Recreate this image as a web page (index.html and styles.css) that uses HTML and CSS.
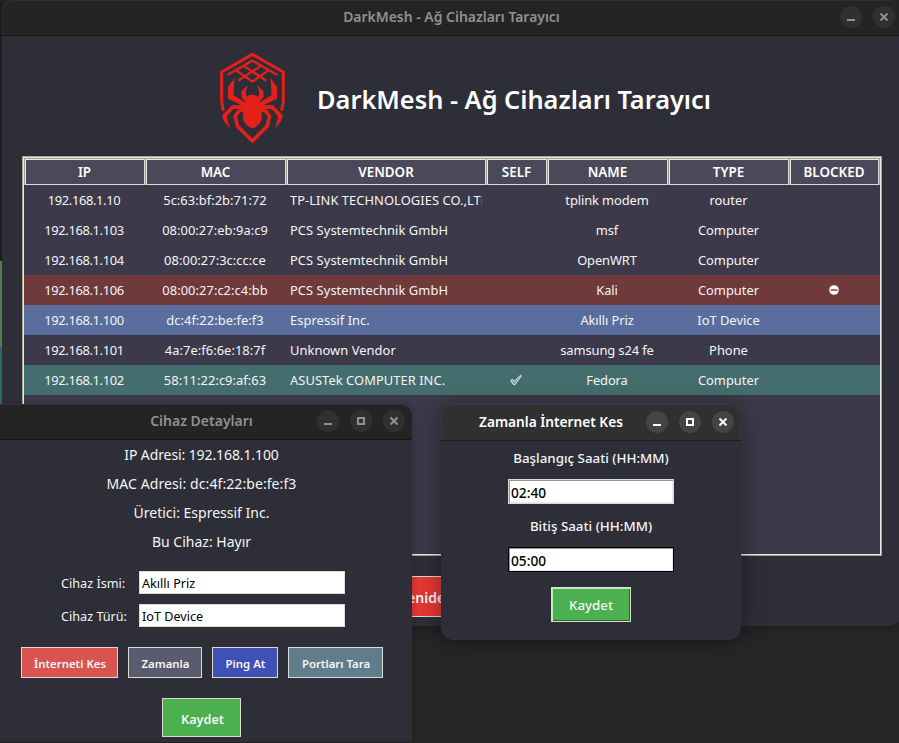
FILE: index.html
```
<!DOCTYPE html>
<html lang="tr">
<head>
<meta charset="utf-8">
<title>DarkMesh</title>
<link rel="stylesheet" href="styles.css">
</head>
<body>
<svg class="defs" width="0" height="0">
  <symbol id="min" viewBox="0 0 22 22"><path d="M7 13h8v2H7z" fill="currentColor"/></symbol>
  <symbol id="max" viewBox="0 0 22 22"><path d="M8 8h6v6H8z" fill="none" stroke="currentColor" stroke-width="2"/></symbol>
  <symbol id="close" viewBox="0 0 22 22"><path d="M7.500 7.500l7 7M14.500 7.500l-7 7" fill="none" stroke="currentColor" stroke-width="2"/></symbol>
</svg>
<div class="desktop">
  <div class="edge"></div>
  <section class="window main">
    <header class="titlebar">
      <span class="title">DarkMesh - Ağ Cihazları Tarayıcı</span>
      <div class="controls">
        <svg><use href="#min"/></svg><svg><use href="#close"/></svg>
      </div>
    </header>
    <div class="brand">
      <svg class="logo" viewBox="0 0 228 300">
        <g fill="none" stroke="#e32019">
          <path stroke-width="9" d="M25 188L20 160V72L112 19l93 53v88l-5 28"/>
          <path stroke-width="7" d="M37 81l75-43 75 43M86 53l68 45M138 53L70 98M64 67l48 34 48-34"/>
          <path stroke-width="11" d="M92 184l-20 5-12 16 8 30 44 44 44-44 8-30-12-16-20-5"/>
        </g>
        <g id="legs" fill="#e32019">
          <path d="M59 90L39 116v36l51 24v-13l-34-21V124z"/>
          <path d="M99 110l-20 20v17l13 15 10-7-9-14v-12z"/>
          <path d="M92 172l-40-1-31 31 6 18 18 21-8-27-1-10 20-21 36-1z"/>
        </g>
        <use href="#legs" transform="matrix(-1 0 0 1 225 0)"/>
        <path fill="#e32019" d="M98 144q14-8 29 0l5 14 8 24v32q-6 20-28 27-22-7-28-27v-32l8-24z"/>
      </svg>
      <h1>DarkMesh - Ağ Cihazları Tarayıcı</h1>
    </div>
    <div class="table">
      <div class="row head"><b>IP</b><b>MAC</b><b>VENDOR</b><b>SELF</b><b>NAME</b><b>TYPE</b><b>BLOCKED</b></div>
      <div class="row"><span>192.168.1.10</span><span>5c:63:bf:2b:71:72</span><span>TP-LINK TECHNOLOGIES CO.,LTD.</span><span></span><span>tplink modem</span><span>router</span><span></span></div>
      <div class="row"><span>192.168.1.103</span><span>08:00:27:eb:9a:c9</span><span>PCS Systemtechnik GmbH</span><span></span><span>msf</span><span>Computer</span><span></span></div>
      <div class="row"><span>192.168.1.104</span><span>08:00:27:3c:cc:ce</span><span>PCS Systemtechnik GmbH</span><span></span><span>OpenWRT</span><span>Computer</span><span></span></div>
      <div class="row blocked"><span>192.168.1.106</span><span>08:00:27:c2:c4:bb</span><span>PCS Systemtechnik GmbH</span><span></span><span>Kali</span><span>Computer</span><span><svg class="stop" viewBox="0 0 10 10"><circle cx="5" cy="5" r="4.800" fill="#fff"/><path d="M1.500 5h7" stroke="#703a3a" stroke-width="1.400"/></svg></span></div>
      <div class="row selected"><span>192.168.1.100</span><span>dc:4f:22:be:fe:f3</span><span>Espressif Inc.</span><span></span><span>Akıllı Priz</span><span>IoT Device</span><span></span></div>
      <div class="row"><span>192.168.1.101</span><span>4a:7e:f6:6e:18:7f</span><span>Unknown Vendor</span><span></span><span>samsung s24 fe</span><span>Phone</span><span></span></div>
      <div class="row self"><span>192.168.1.102</span><span>58:11:22:c9:af:63</span><span>ASUSTek COMPUTER INC.</span><span><svg class="check" viewBox="0 0 12 12"><path d="M.6 6.500l2.200-1.200 1.400 2.200L10.500 1.200l1 .600L5 10.700 3.200 10.400z" fill="#7fa5a2" stroke="#e8f0ef" stroke-width=".9"/></svg></span><span>Fedora</span><span>Computer</span><span></span></div>
    </div>
    <button class="scan">Yeniden Tara</button>
  </section>

  <section class="window details">
    <header class="titlebar">
      <span class="title">Cihaz Detayları</span>
      <div class="controls">
        <svg><use href="#min"/></svg><svg><use href="#max"/></svg><svg><use href="#close"/></svg>
      </div>
    </header>
    <p class="ip">IP Adresi: 192.168.1.100</p>
    <p class="mac">MAC Adresi: dc:4f:22:be:fe:f3</p>
    <p>Üretici: Espressif Inc.</p>
    <p>Bu Cihaz: Hayır</p>
    <div class="form">
      <label>Cihaz İsmi:</label><div class="field">Akıllı Priz</div>
      <label>Cihaz Türü:</label><div class="field">IoT Device</div>
    </div>
    <div class="actions">
      <button class="cut">İnterneti Kes</button><button class="timer">Zamanla</button><button class="ping">Ping At</button><button class="ports">Portları Tara</button>
    </div>
    <button class="save">Kaydet</button>
  </section>

  <section class="window schedule">
    <header class="titlebar">
      <span class="title">Zamanla İnternet Kes</span>
      <div class="controls">
        <svg><use href="#min"/></svg><svg><use href="#max"/></svg><svg><use href="#close"/></svg>
      </div>
    </header>
    <label>Başlangıç Saati (HH:MM)</label>
    <div class="time">02:40</div>
    <label>Bitiş Saati (HH:MM)</label>
    <div class="time focus">05:00</div>
    <button class="apply">Kaydet</button>
  </section>
</div>
</body>
</html>
```
FILE: styles.css
```
* { box-sizing: border-box; }
body { margin: 0; font-family: "Noto Sans", sans-serif; background: #272727; color: #f4f4f6; }
.defs { position: absolute; }
.desktop { position: relative; width: 899px; height: 743px; overflow: hidden; background: #272727; }
.edge { width: 3px; height: 404px; background: linear-gradient(#222 0 261px, #5b8f5b 261px 347px, #37727a 347px); }

.window { position: absolute; background: #2e2e38; display: flex; flex-direction: column; }
.titlebar { flex: none; height: 36px; background: #242424; border-bottom: 1px solid #171717; border-radius: 12px 12px 0 0; position: relative; display: flex; align-items: center; justify-content: center; box-shadow: inset 0 1px #303030; }
.title { font-size: 14px; font-weight: 600; line-height: 20px; color: #919191; white-space: nowrap; }
.controls { position: absolute; top: 6px; right: 6px; display: flex; gap: 11px; color: #919191; }
.controls svg { width: 22px; height: 22px; border-radius: 50%; background: #303030; }
button { font-family: inherit; color: #f6f6f6; padding: 0; border: 1px solid #dcdad5; border-radius: 0; white-space: nowrap; }

.main { left: 2px; top: 0; width: 899px; height: 626px; border-radius: 12px; box-shadow: 0 3px 14px rgba(0,0,0,.25); }
.main > .titlebar { box-shadow: inset 1px 1px #2f2f2f; }
.main .title { font-size: 13.950px; padding-bottom: 2px; }
.brand { height: 120px; display: flex; align-items: flex-start; padding: 12px 0 0 213px; }
.logo { width: 76px; height: 100px; }
h1 { margin: 33px 0 0 26px; font-size: 25.350px; line-height: 36px; font-weight: 600; color: #fff; white-space: nowrap; }

.table { margin-left: 20px; width: 860px; height: 400px; background: #3c3a4a; border: 1px solid #a8a297; box-shadow: inset 1px 1px #eeebe7, inset -1px -1px #eeebe7; padding: 1px; }
.row { display: grid; grid-template-columns: 121px 141px 200px 61px 121px 121px 91px; height: 30px; font-size: 12.900px; line-height: 30px; }
.row span { text-align: center; white-space: nowrap; overflow: hidden; height: 30px; }
.row span:nth-child(1) { letter-spacing: -.36px; padding-right: 1px; }
.row span:nth-child(2) { letter-spacing: .05px; padding-right: 1px; }
.row span:nth-child(3) { text-align: left; margin: 0 4px; letter-spacing: .06px; }
.row span:nth-child(4), .row span:nth-child(7) { padding-right: 2px; }
.row span:nth-child(5) { letter-spacing: -.1px; padding-right: 1px; }
.head { height: 27px; background: #9e9a91; border-top: 1px solid #9e9a91; }
.head b { height: 26px; margin-left: 1px; border: 1px solid #eeebe7; border-right-color: #dcdad5; border-bottom-color: #dcdad5; background: #4b4959; font-size: 13.400px; font-weight: 600; line-height: 25px; text-align: center; text-indent: -1px; color: #fff; }
.head b:last-child { margin-right: 1px; }
.blocked { background: #703a3a; }
.selected { background: #5a6e9e; }
.self { background: #446e6d; }
.stop { width: 10px; height: 10px; }
.check { width: 12px; height: 12px; margin-top: 9px; }
.scan { margin: 20px 0 0 375px; width: 132px; height: 41px; background: #e53935; font-size: 14px; font-weight: 600; padding-top: 2px; }

.details { left: -9px; top: 404px; width: 421px; height: 339px; border-bottom: 1px solid #202026; border-radius: 12px 12px 0 0; box-shadow: 0 2px 8px rgba(0,0,0,.25); }
.details .title { padding-bottom: 1px; }
.details .controls { right: 7px; }
.details p { margin: 0; height: 29px; line-height: 29px; font-size: 14px; text-align: center; }
.details .ip { letter-spacing: -.1px; }
.details .mac { letter-spacing: .08px; }
.form { margin: 15px 0 0 70px; display: grid; grid-template-columns: 78px 206px; row-gap: 10px; }
.form label { font-size: 12.650px; line-height: 24px; height: 23px; white-space: nowrap; }
.field { height: 23px; border: 1px solid #dcdad5; background: #fff; color: #000; font-size: 12.650px; line-height: 22px; padding-left: 2px; }
.actions { margin: 20px 0 0 30px; display: flex; gap: 10px; }
.actions button { height: 31px; font-size: 11.400px; font-weight: 600; padding: 2px 0 0 1px; }
.actions .cut { width: 97px; background: #d9534f; }
.actions .timer { width: 74px; background: #5b5b70; }
.actions .ping { width: 66px; background: #3f51b5; }
.actions .ports { width: 95px; background: #607d8b; }
.save { margin: 20px 0 0 171px; width: 79px; height: 39px; background: #4caf50; font-size: 12.650px; font-weight: 600; padding: 3px 0 0 2px; }

.schedule { left: 441px; top: 404px; width: 300px; height: 236px; border-radius: 13px; align-items: center; box-shadow: 0 3px 24px rgba(0,0,0,.4); }
.schedule .titlebar { width: 100%; height: 37px; background: #303030; border-bottom-color: #1c1c1c; box-shadow: inset 0 1px #3c3c3c, inset 1px 0 #383838, inset -1px 0 #383838; }
.schedule .title { color: #fff; font-size: 13.700px; margin-right: 80px; }
.schedule .controls { top: 7px; right: 7px; color: #fff; }
.schedule .controls svg { background: #444; }
.schedule label { font-size: 13.350px; font-weight: 500; line-height: 20px; margin-top: 7px; }
.time { width: 166px; height: 25px; margin-top: 11px; border: 1px solid #dcdad5; background: #fff; box-shadow: inset 1px 1px #96948f, inset -1px -1px #eceae6; color: #000; font-size: 13.700px; font-weight: 500; line-height: 25px; padding-left: 2px; }
.time + label { margin-top: 12px; }
.time.focus { border-color: #000; }
.apply { margin-top: 15px; width: 80px; height: 35px; background: #4caf50; box-shadow: inset 1px 1px #b5f5b8, inset -1px -1px #2b642d; font-size: 13.300px; font-weight: 500; }
```
